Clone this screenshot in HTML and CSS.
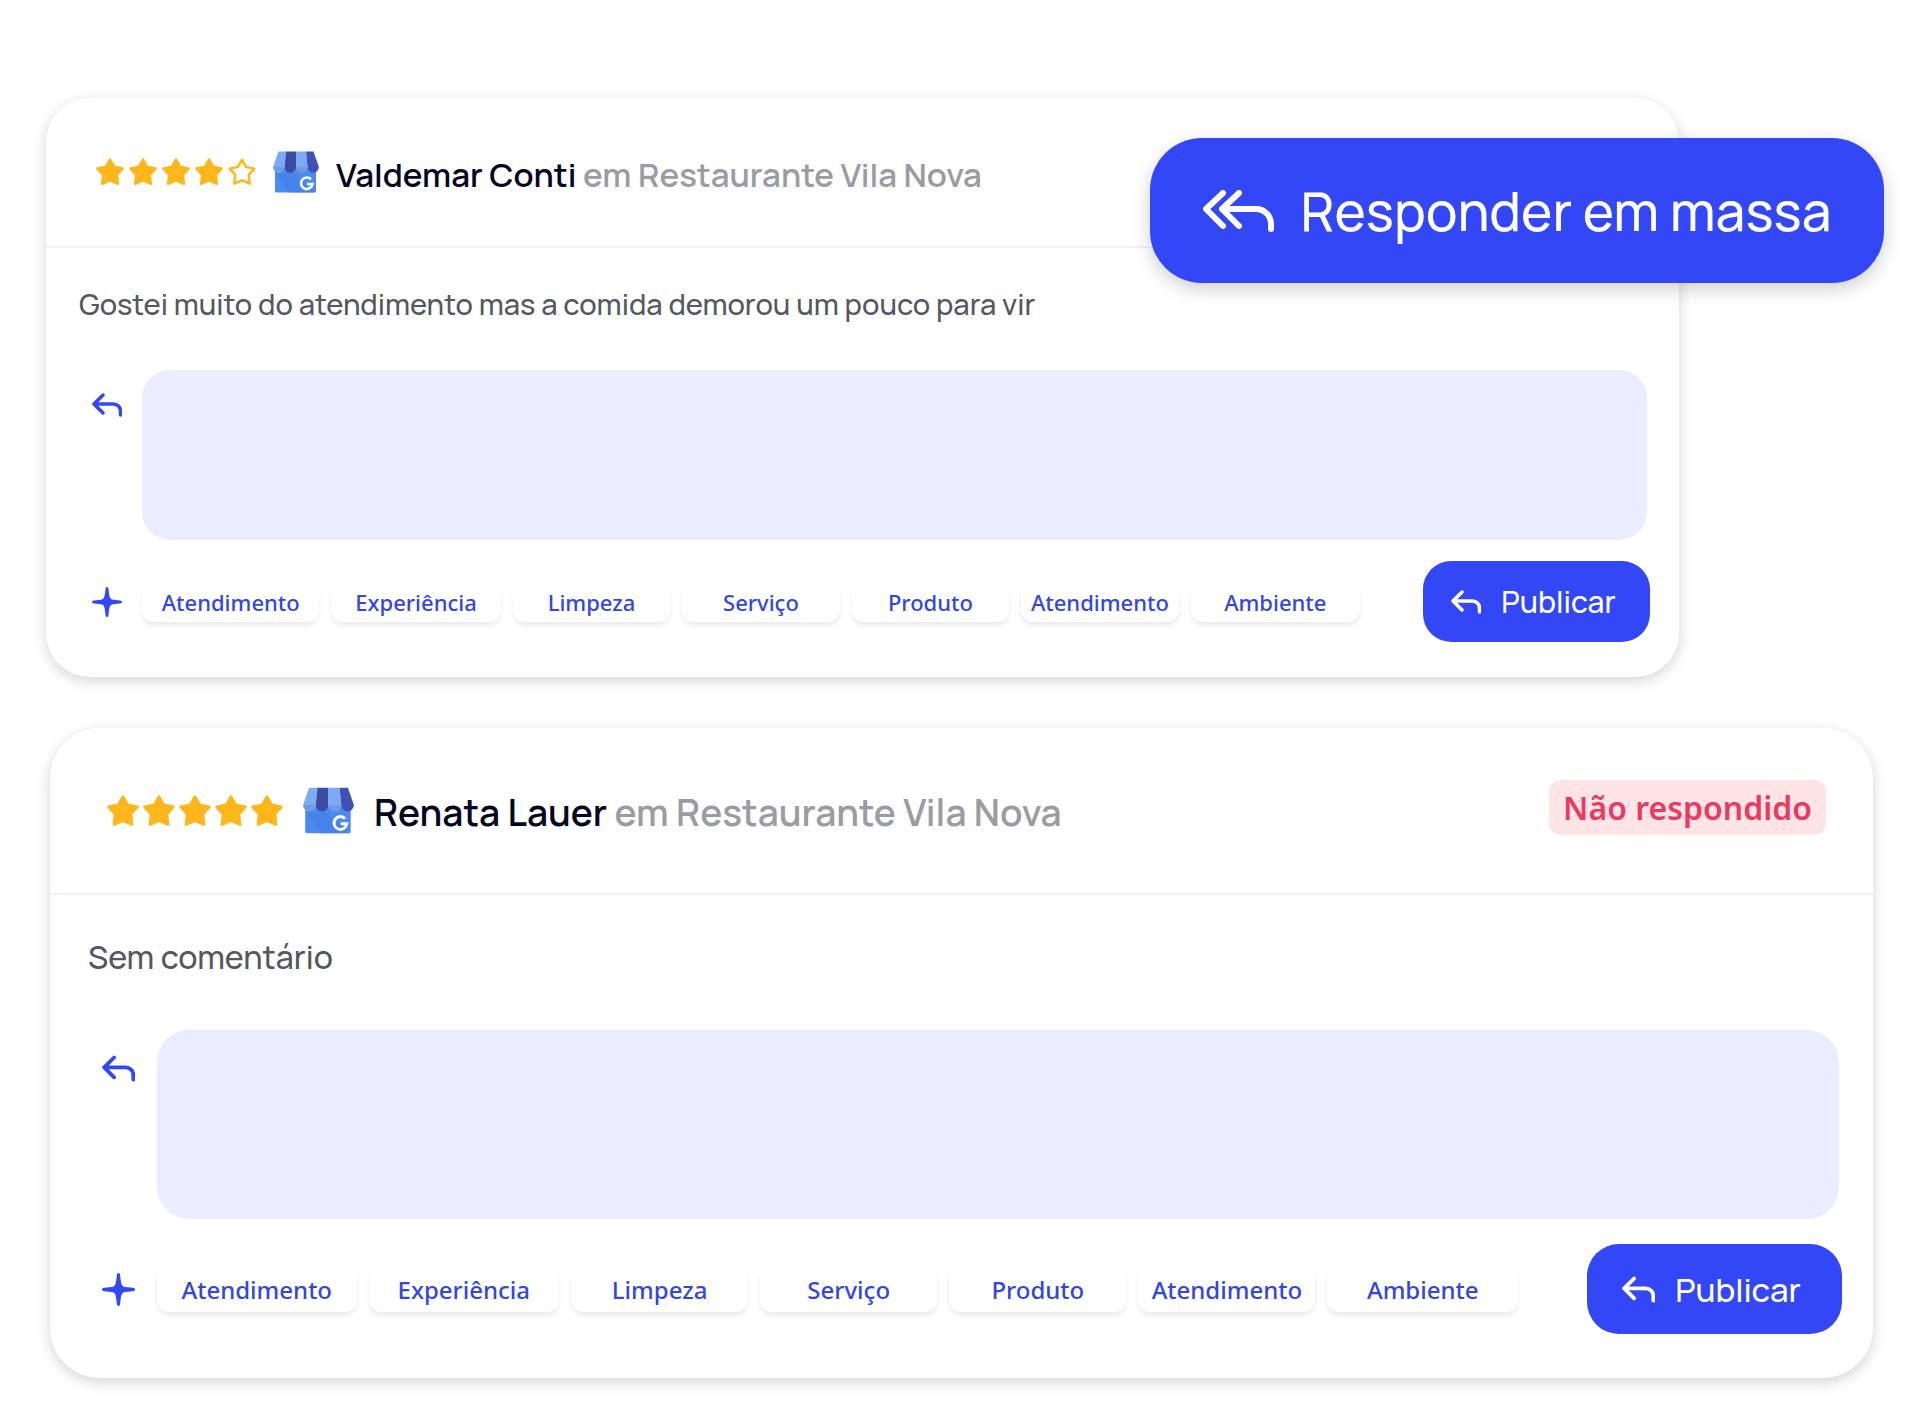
FILE: index.html
```html
<!DOCTYPE html>
<html lang="pt-BR">
<head>
    <meta charset="UTF-8">
    <meta name="viewport" content="width=device-width, initial-scale=1.0">
    <title>Avaliações</title>
    <link rel="stylesheet" href="styles.css">
</head>
<body>
    <!-- Shared icons -->
    <svg class="sprite" aria-hidden="true">
        <symbol id="star" viewBox="0 0 28 28">
            <path d="M14 1.500l4.200 7.200 8.400 1.700-5.700 6.500 1 9-7.900-3.400-7.900 3.400 1-9-5.700-6.500 8.400-1.700z" fill="#ffb61a" stroke="#ffb61a" stroke-width="2.400" stroke-linejoin="round"/>
        </symbol>
        <symbol id="star-empty" viewBox="0 0 28 28">
            <path d="M14 1.700l4 7.200 8.400 1.700-5.700 6.300 1 8.800-7.700-3.400-7.700 3.400 1-8.800-5.700-6.300L10 8.900z" fill="none" stroke="#ffb61a" stroke-width="2.400" stroke-linejoin="round"/>
        </symbol>
        <symbol id="store" viewBox="0 0 46 42">
            <path d="M2 17h41v23a1.500 1.500 0 0 1-1.500 1.500h-38A1.500 1.500 0 0 1 2 40z" fill="#4c8af0"/>
            <path d="M18 20l24 21.500H16L4 24z" fill="#3f7ee6" opacity=".6"/>
            <path d="M5.500 .5H13L11.500 16a5.700 5.700 0 0 1-11.400 0z" fill="#7baaf7"/>
            <path d="M13 .5h10V16a5.700 5.700 0 0 1-11.500 0z" fill="#3c4ba8"/>
            <path d="M23 .5h10L34.500 16A5.700 5.700 0 0 1 23 16z" fill="#7baaf7"/>
            <path d="M33 .5h7.500L45.900 16a5.700 5.700 0 0 1-11.400 0z" fill="#3f51b5"/>
            <path d="M11.500 16a5.700 5.700 0 0 1-11.400 0zM34.500 16a5.700 5.700 0 0 1-11.500 0z" fill="#709be0"/>
            <path d="M38 28.300a5.800 5.800 0 1 0 1.500 4.700h-5.500" fill="none" stroke="#fff" stroke-width="2.600"/>
        </symbol>
        <symbol id="reply" viewBox="0 0 30 24">
            <path d="M11 2L2 11l9 9M2 11h19.500a7 7 0 0 1 7 7v4" fill="none" stroke="currentColor" stroke-width="3.500" stroke-linecap="round" stroke-linejoin="round"/>
        </symbol>
        <symbol id="reply-all" viewBox="0 0 72 42">
            <path d="M20 3L3 19l17 17M36 3L19 19l17 17M19 19h34a15 15 0 0 1 15 15v5" fill="none" stroke="currentColor" stroke-width="6" stroke-linecap="round" stroke-linejoin="round"/>
        </symbol>
        <symbol id="spark" viewBox="0 0 30 30">
            <path d="M15 0c1 0 1.300.8 1.500 2 .8 8.500 1.500 10.200 4.500 10.700l7 .8c1.300.2 2 .7 2 1.500s-.7 1.300-2 1.500l-7 .8c-3 .5-3.700 2.200-4.500 10.700-.2 1.200-.5 2-1.500 2s-1.300-.8-1.500-2C12.700 19.500 12 17.800 9 17.300l-7-.8C.7 16.300 0 15.800 0 15s.7-1.300 2-1.500l7-.8c3-.5 3.700-2.200 4.500-10.700.2-1.200.5-2 1.500-2z" fill="currentColor"/>
        </symbol>
    </svg>

    <main class="reviews">
        <button class="bulk-button" type="button">
            <svg class="bulk-icon" aria-hidden="true"><use href="#reply-all"/></svg>
            Responder em massa
        </button>

        <article class="card">
            <header class="card-header">
                <div class="stars" role="img" aria-label="4 de 5 estrelas">
                    <svg class="star"><use href="#star"/></svg>
                    <svg class="star"><use href="#star"/></svg>
                    <svg class="star"><use href="#star"/></svg>
                    <svg class="star"><use href="#star"/></svg>
                    <svg class="star"><use href="#star-empty"/></svg>
                </div>
                <svg class="store" aria-hidden="true"><use href="#store"/></svg>
                <h2 class="author">Valdemar Conti <span class="place">em Restaurante Vila Nova</span></h2>
            </header>
            <div class="card-body">
                <p class="comment">Gostei muito do atendimento mas a comida demorou um pouco para vir</p>
                <div class="reply">
                    <svg class="reply-icon" aria-hidden="true"><use href="#reply"/></svg>
                    <textarea class="reply-box" aria-label="Resposta para Valdemar Conti"></textarea>
                </div>
                <div class="actions">
                    <svg class="spark" aria-hidden="true"><use href="#spark"/></svg>
                    <div class="chips">
                        <button class="chip" type="button">Atendimento</button>
                        <button class="chip" type="button">Experiência</button>
                        <button class="chip" type="button">Limpeza</button>
                        <button class="chip" type="button">Serviço</button>
                        <button class="chip" type="button">Produto</button>
                        <button class="chip" type="button">Atendimento</button>
                        <button class="chip" type="button">Ambiente</button>
                    </div>
                    <button class="publish" type="button">
                        <svg class="publish-icon" aria-hidden="true"><use href="#reply"/></svg>
                        Publicar
                    </button>
                </div>
            </div>
        </article>

        <article class="card card-large">
            <header class="card-header">
                <div class="stars" role="img" aria-label="5 de 5 estrelas">
                    <svg class="star"><use href="#star"/></svg>
                    <svg class="star"><use href="#star"/></svg>
                    <svg class="star"><use href="#star"/></svg>
                    <svg class="star"><use href="#star"/></svg>
                    <svg class="star"><use href="#star"/></svg>
                </div>
                <svg class="store" aria-hidden="true"><use href="#store"/></svg>
                <h2 class="author">Renata Lauer <span class="place">em Restaurante Vila Nova</span></h2>
                <span class="status">Não respondido</span>
            </header>
            <div class="card-body">
                <p class="comment">Sem comentário</p>
                <div class="reply">
                    <svg class="reply-icon" aria-hidden="true"><use href="#reply"/></svg>
                    <textarea class="reply-box" aria-label="Resposta para Renata Lauer"></textarea>
                </div>
                <div class="actions">
                    <svg class="spark" aria-hidden="true"><use href="#spark"/></svg>
                    <div class="chips">
                        <button class="chip" type="button">Atendimento</button>
                        <button class="chip" type="button">Experiência</button>
                        <button class="chip" type="button">Limpeza</button>
                        <button class="chip" type="button">Serviço</button>
                        <button class="chip" type="button">Produto</button>
                        <button class="chip" type="button">Atendimento</button>
                        <button class="chip" type="button">Ambiente</button>
                    </div>
                    <button class="publish" type="button">
                        <svg class="publish-icon" aria-hidden="true"><use href="#reply"/></svg>
                        Publicar
                    </button>
                </div>
            </div>
        </article>
    </main>
</body>
</html>
```
FILE: styles.css
```css
* {
    box-sizing: border-box;
}

body {
    margin: 0;
    background-color: #fff;
    font-family: Manrope, Inter, sans-serif;
}

button {
    border: 0;
    cursor: pointer;
    font-family: inherit;
    font-weight: 500;
}

.sprite {
    display: none;
}

.reviews {
    position: relative;
    display: flex;
    flex-direction: column;
    gap: 51px;
    padding: 98px 47px 30px 46px;
}

/* Card sizes, the large one overrides them */
.card {
    --title: 33px;
    --text: 29px;
    --button: 30px;
    --line: 40px;
    --chip: 22px;
    --chip-height: 40px;
    --header: 148px;
    --side: 50px;
    --inset: 13px;
    --star: 28px;
    --star-gap: 5px;
    --store: 46px;
    --icon: 30px;
    --header-gap: 17px;
    --gap: 20px;
    --box: 170px;
    --radius: 28px;
    margin-right: 194px;
    border-radius: 44px;
    background-color: #fff;
    box-shadow: 0 4px 14px rgba(20, 20, 40, 0.18);
}

.card-large {
    --title: 37px;
    --text: 32px;
    --button: 33px;
    --line: 44px;
    --chip: 24px;
    --chip-height: 46px;
    --header: 165px;
    --side: 57px;
    --inset: 14px;
    --star: 32px;
    --star-gap: 4px;
    --store: 51px;
    --icon: 33px;
    --header-gap: 20px;
    --gap: 22px;
    --box: 189px;
    --radius: 32px;
    margin: 0 0 0 4px;
    border-radius: 50px;
}

.card-header {
    display: flex;
    align-items: center;
    gap: var(--header-gap);
    height: calc(var(--header) + 2px);
    padding: 0 47px 0 var(--side);
    border-bottom: 2px solid #f0f2fa;
}

.stars {
    display: flex;
    gap: var(--star-gap);
}

.star {
    width: var(--star);
    height: var(--star);
}

.store {
    width: var(--store);
    height: var(--store);
}

.author {
    margin: 0;
    padding-top: 6px;
    color: #05061f;
    font-size: var(--title);
    font-weight: 600;
    line-height: var(--line);
}

.card-large .author {
    padding-top: 2px;
}

.place {
    color: #9b9ca1;
}

.status {
    margin: 0 0 6px auto;
    padding: 5px 14px;
    border-radius: 12px;
    background-color: #ffe4e6;
    color: #ea3a60;
    font-family: "Noto Sans", sans-serif;
    font-size: 32px;
    font-weight: 600;
    line-height: 45px;
}

.card-body {
    padding: 36px 29px 35px 33px;
}

.card-large .card-body {
    padding: 40px 31px 44px 38px;
}

.comment {
    margin: 0 0 46px;
    color: #555761;
    font-size: var(--text);
    font-weight: 500;
    line-height: var(--line);
}

.card-large .comment {
    margin-bottom: 51px;
}

.reply {
    display: flex;
    gap: var(--gap);
    padding: 0 3px 0 var(--inset);
}

.reply-icon,
.spark {
    flex: none;
    width: var(--icon);
    height: var(--icon);
    color: #3347f7;
}

.reply-icon {
    margin-top: 20px;
}

.card-large .reply-icon {
    margin-top: 22px;
}

.reply-box {
    flex: 1;
    height: var(--box);
    padding: 20px 28px;
    border: 0;
    border-radius: var(--radius);
    outline: 0;
    resize: none;
    background-color: #ebecff;
    color: #50525c;
    font-family: inherit;
    font-size: var(--text);
}

.actions {
    display: flex;
    align-items: center;
    gap: var(--gap);
    margin-top: 21px;
    padding-left: var(--inset);
}

.card-large .actions {
    margin-top: 25px;
}

.chips {
    flex: 1;
    display: grid;
    grid-template-columns: 178fr 170fr 158fr 158fr 158fr 158fr 170fr;
    gap: 12px;
    margin-right: 43px;
}

.card-large .chips {
    margin-right: 47px;
}

.chip {
    height: var(--chip-height);
    padding: 0;
    border-radius: 12px;
    background-color: #fff;
    box-shadow: 0 4px 4px rgba(0, 0, 0, 0.07);
    color: #3347e0;
    font-family: "Noto Sans", sans-serif;
    font-size: var(--chip);
}

.publish {
    display: flex;
    align-items: center;
    justify-content: center;
    gap: 20px;
    width: 227px;
    height: 81px;
    padding: 0 6px 0 0;
    border-radius: var(--radius);
    background-color: #3347f7;
    color: #fff;
    font-size: var(--button);
}

.card-large .publish {
    width: 255px;
    height: 90px;
}

.publish-icon {
    width: var(--icon);
    height: var(--icon);
}

/* Floats over the corner of the first card */
.bulk-button {
    position: absolute;
    top: 138px;
    right: 36px;
    display: flex;
    align-items: center;
    justify-content: center;
    gap: 26px;
    width: 734px;
    height: 145px;
    border-radius: 52px;
    background-color: #3347f7;
    box-shadow: 0 6px 18px rgba(20, 20, 40, 0.2);
    color: #fff;
    font-size: 53px;
}

.bulk-icon {
    width: 72px;
    height: 42px;
}
```
